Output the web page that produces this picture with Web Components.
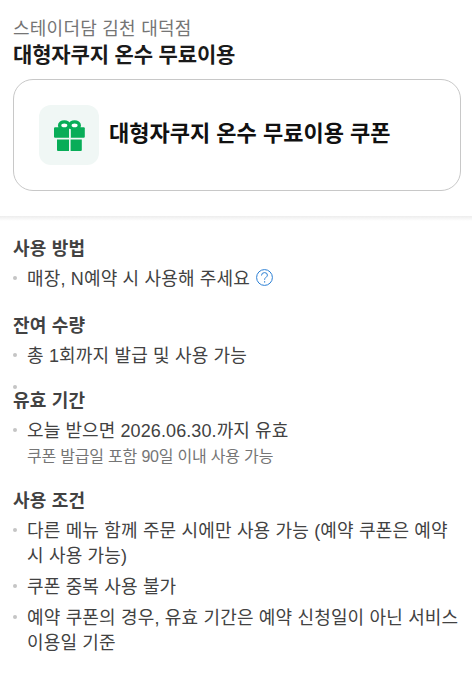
<!DOCTYPE html>
<html lang="ko">
<head>
<meta charset="utf-8">
<title>쿠폰</title>
<style>
  body {
    margin: 0;
    background: #fff;
    font-family: "Liberation Sans", "Noto Sans CJK KR", sans-serif;
    color: #424242;
  }
</style>
</head>
<body>
<coupon-page>
  <coupon-header>
    <span slot="store">스테이더담 김천 대덕점</span>
    <span slot="title">대형자쿠지 온수 무료이용</span>
  </coupon-header>
  <coupon-card>대형자쿠지 온수 무료이용 쿠폰</coupon-card>
  <section-divider></section-divider>
  <info-section style="--gap: 22px">
    <span slot="heading">사용 방법</span>
    <info-item>매장, N예약 시 사용해 주세요<help-icon></help-icon></info-item>
  </info-section>
  <info-section style="--gap: 0px">
    <span slot="heading">잔여 수량</span>
    <info-item>총 1회까지 발급 및 사용 가능</info-item>
    <info-item class="empty"></info-item>
  </info-section>
  <info-section style="--gap: 20px">
    <span slot="heading">유효 기간</span>
    <info-item style="letter-spacing: 0.1px">오늘 받으면 2026.06.30.까지 유효<span slot="note">쿠폰 발급일 포함 90일 이내 사용 가능</span></info-item>
  </info-section>
  <info-section style="--gap: 0px">
    <span slot="heading">사용 조건</span>
    <info-item>다른 메뉴 함께 주문 시에만 사용 가능 (예약 쿠폰은 예약 시 사용 가능)</info-item>
    <info-item>쿠폰 중복 사용 불가</info-item>
    <info-item>예약 쿠폰의 경우, 유효 기간은 예약 신청일이 아닌 서비스 이용일 기준</info-item>
  </info-section>
</coupon-page>

<script>
function define(name, html) {
  const template = document.createElement("template");
  template.innerHTML = html;
  customElements.define(name, class extends HTMLElement {
    constructor() {
      super();
      this.attachShadow({ mode: "open" }).appendChild(template.content.cloneNode(true));
    }
  });
}

define("coupon-page", `
  <style>
    :host {
      display: flex;
      flex-direction: column;
      height: 682px;
      overflow: hidden;
    }
  </style>
  <slot></slot>
`);

define("coupon-header", `
  <style>
    :host {
      display: block;
      padding: 16px 13px 0;
    }
    .store {
      font-size: 18px;
      line-height: 26px;
      letter-spacing: 0.25px;
      color: #757575;
    }
    .title {
      font-size: 21px;
      font-weight: 700;
      line-height: 26px;
      letter-spacing: -0.15px;
      color: #1a1a1a;
    }
  </style>
  <div class="store"><slot name="store"></slot></div>
  <div class="title"><slot name="title"></slot></div>
`);

define("coupon-card", `
  <style>
    :host {
      display: flex;
      align-items: center;
      gap: 10px;
      box-sizing: border-box;
      height: 112px;
      margin: 11px 11px 0 13px;
      padding: 0 25px;
      border: 1px solid #c8c8c8;
      border-radius: 20px;
      font-size: 22px;
      font-weight: 700;
      color: #111;
    }
    .name { padding-bottom: 8px; }
  </style>
  <gift-icon></gift-icon>
  <div class="name"><slot></slot></div>
`);

define("gift-icon", `
  <style>
    :host {
      display: block;
      width: 60px;
      height: 60px;
      border-radius: 12px;
      background: #f0f7f5;
    }
    svg { display: block; }
  </style>
  <svg width="60" height="60" viewBox="0 0 60 60">
    <g fill="#08ad58">
      <path d="M16.100 22.200H30v10.600H16.100q-1.100 0-1.100-1.100v-8.400q0-1.100 1.100-1.100z"/>
      <path d="M31.600 22.200h13.100q1.100 0 1.100 1.100v8.400q0 1.100-1.100 1.100H31.600z"/>
      <path d="M18 34.400h12V46H19q-1 0-1-1z"/>
      <path d="M31.600 34.400h11.200V45q0 1-1 1H31.600z"/>
    </g>
    <g fill="#fff" stroke="#08ad58" stroke-width="3.400">
      <ellipse cx="25.300" cy="20.400" rx="4.700" ry="3.500"/>
      <ellipse cx="35.600" cy="20.400" rx="4.700" ry="3.500"/>
    </g>
    <path d="M30.800 24v8.800" stroke="#f0f7f5" stroke-width="1.600"/>
  </svg>
`);

define("section-divider", `
  <style>
    :host {
      display: block;
      flex: none;
      height: 5px;
      margin: 25px 0 16px;
      background: linear-gradient(#ededed, #fff);
    }
  </style>
`);

define("info-section", `
  <style>
    :host {
      display: flex;
      flex-direction: column;
      padding: 0 11px var(--gap) 13px;
    }
    .heading {
      margin-bottom: 5px;
      font-size: 18px;
      font-weight: 700;
      line-height: 25px;
      letter-spacing: 0.2px;
    }
    .items {
      display: flex;
      flex-direction: column;
      gap: 6px;
    }
  </style>
  <div class="heading"><slot name="heading"></slot></div>
  <div class="items"><slot></slot></div>
`);

define("info-item", `
  <style>
    :host {
      display: grid;
      grid-template-columns: 4px 1fr;
      column-gap: 10px;
      font-size: 18px;
      line-height: 25px;
      letter-spacing: 0.17px;
      word-break: keep-all;
    }
    /* an item without text keeps only its bullet */
    :host(.empty) {
      height: 4px;
      margin-top: 10px;
    }
    .dot {
      width: 4px;
      height: 4px;
      margin-top: 9px;
      border-radius: 50%;
      background: #c5c5c5;
    }
    :host(.empty) .dot { margin-top: 0; }
    :host(.empty) .body { display: none; }
    .note {
      font-size: 16px;
      letter-spacing: -0.2px;
      color: #757575;
    }
  </style>
  <span class="dot"></span>
  <div class="body">
    <div><slot></slot></div>
    <div class="note"><slot name="note"></slot></div>
  </div>
`);

define("help-icon", `
  <style>
    :host {
      display: inline-block;
      width: 17px;
      height: 17px;
      margin-left: 6px;
      vertical-align: -1px;
    }
    svg { display: block; }
  </style>
  <svg width="17" height="17" viewBox="0 0 17 17" fill="none" stroke="#2b7fd4" stroke-width="1">
    <circle cx="8.500" cy="8.500" r="7.900"/>
    <path d="M5.500 6.500q.1-2.900 3-2.900 2.900 0 2.900 2.500 0 1.200-1.400 2.200-1.400 1-1.400 2.500"/>
    <path d="M8.600 12.200v1.300" stroke-width="1.200"/>
  </svg>
`);
</script>
</body>
</html>
